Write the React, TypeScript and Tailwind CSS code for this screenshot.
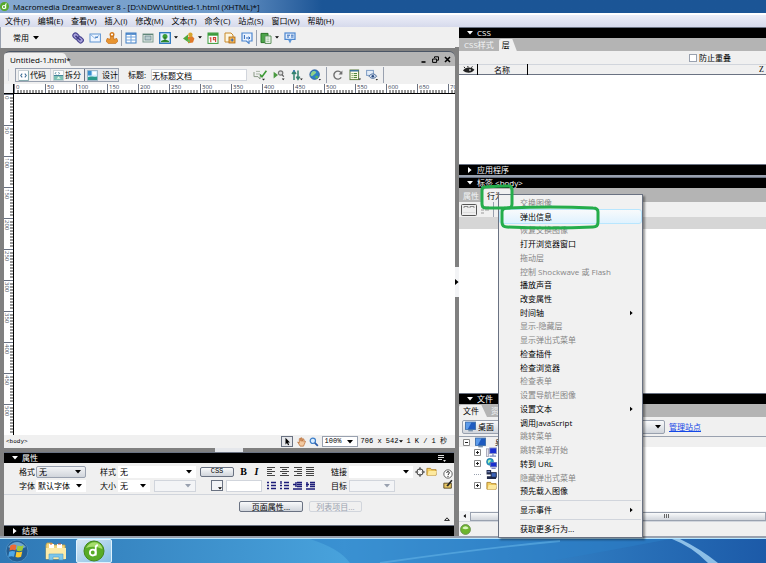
import React from 'react';
import clsx from 'clsx';

interface IconProps {
	children: React.ReactNode;
	className?: string;
	box?: string;
}

const Icon = ({ children, className, box = '0 0 12 12' }: IconProps) => (
	<svg viewBox={box} className={clsx('shrink-0', className ?? 'w-3 h-3')} fill="none" aria-hidden="true">
		{children}
	</svg>
);

const Caret = ({ className }: { className?: string }) => (
	<Icon box="0 0 6 4" className={clsx('w-[6px] h-1 pointer-events-none', className)}>
		<path d="M0 0h6L3 3.6z" fill="currentColor" />
	</Icon>
);

const CaretRight = ({ className }: { className?: string }) => (
	<Icon box="0 0 4 6" className={clsx('w-1 h-[6px]', className)}>
		<path d="M0 0v6l3.6-3z" fill="currentColor" />
	</Icon>
);

/* ---------- icons ---------- */

const LinkIcon = () => (
	<Icon>
		<g transform="rotate(42 6 6)">
			<rect x="0" y="3.4" width="6.4" height="5" rx="2.2" fill="#a9a3dc" stroke="#4a4590" strokeWidth="1.2" />
			<rect x="5.6" y="3.4" width="6.4" height="5" rx="2.2" fill="#a9a3dc" stroke="#4a4590" strokeWidth="1.2" />
			<path d="M2.6 6h6.8" stroke="#3b3780" strokeWidth="1.6" />
		</g>
	</Icon>
);
const MailIcon = () => (
	<Icon>
		<rect x="1" y="2" width="10.4" height="8" fill="#eef5ff" stroke="#5d93d2" />
		<path d="M2 3l4.2 3.6L10.4 3" stroke="#8fb7e3" />
		<path d="M6 5.2h3" stroke="#2d6cb5" />
	</Icon>
);
const AnchorIcon = () => (
	<Icon>
		<circle cx="6" cy="2.6" r="1.8" fill="#fff" stroke="#d47a1c" strokeWidth="1.4" />
		<path d="M4.4 4.4h3.2V7h1.8l1-1L12 9l-2.3 2.6H2.3L0 9l1.6-3 1 1h1.8z" fill="#e8942f" stroke="#b9610f" strokeWidth=".6" />
	</Icon>
);
const TableIcon = () => (
	<Icon>
		<rect x="1" y="1" width="10" height="10" fill="#fff" stroke="#3d7cc4" />
		<path d="M1 2h10" stroke="#3d7cc4" strokeWidth="1.6" />
		<path d="M6 2v9M1 5h10M1 8h10" stroke="#6ea1db" />
	</Icon>
);
const LayerIcon = () => (
	<Icon>
		<rect x="1" y="2" width="10" height="8" fill="#e6efe9" stroke="#7d9a90" />
		<rect x="3" y="4" width="6" height="4" fill="#b9cdd0" stroke="#6c878e" strokeWidth=".8" />
		<path d="M1 2.5h10" stroke="#60867a" />
	</Icon>
);
const ImageIcon = () => (
	<Icon>
		<rect x=".7" y=".7" width="10.6" height="10.6" fill="#dff0ff" stroke="#2c76bf" strokeWidth="1.3" />
		<circle cx="6" cy="4.4" r="2.5" fill="#3b9c35" />
		<path d="M2 9.2c2-2 6-2 8 0v1H2z" fill="#2c8a2c" />
		<path d="M6 5v4" stroke="#215f1f" />
	</Icon>
);
const MediaIcon = () => (
	<Icon>
		<path d="M0 6.4l5-4V10z" fill="#52a83b" />
		<path d="M5 5l4-1 2.4 2.6L10 10.6l-5 .6z" fill="#e0792a" />
		<circle cx="7.4" cy="2.8" r="2.2" fill="#d8a42c" />
		<path d="M4 8.4l3-1.6v4.4z" fill="#6fbb52" />
	</Icon>
);
const CalendarIcon = () => (
	<Icon>
		<rect x="1" y="1" width="10" height="10.4" fill="#fff" stroke="#3b9b3b" />
		<path d="M1 2.4h10" stroke="#3b9b3b" strokeWidth="2.6" />
		<path d="M3.8 5.2v5M2.6 6h1M8.6 10V5.6H6.4v2.2h2" stroke="#d04030" strokeWidth="1.1" />
	</Icon>
);
const IncludeIcon = () => (
	<Icon>
		<path d="M1 1h6l2 2v7H1z" fill="#fdf6e0" stroke="#c98a2b" />
		<rect x="5" y="5" width="6" height="6" fill="#f5b556" stroke="#a9650e" strokeWidth=".8" />
		<path d="M6.6 8h3M8.2 6.5v3" stroke="#2c66b8" strokeWidth="1.2" />
	</Icon>
);
const CommentIcon = () => (
	<Icon>
		<path d="M1 1h10v8H8v2.4L5.4 9H1z" fill="#eaf3ff" stroke="#4c86cf" strokeWidth="1.2" />
		<path d="M3.4 3v4M5 6h4M7.6 4.6L9 6 7.6 7.4" stroke="#2c66b8" />
	</Icon>
);
const TemplateIcon = () => (
	<Icon>
		<path d="M1 1.4h7v9.2H1z" fill="#4da64a" stroke="#2b7428" />
		<path d="M5 4h6v7.4H5z" fill="#f7fbf6" stroke="#5a8f58" />
		<path d="M6.4 6h3M6.4 7.8h3M6.4 9.4h3" stroke="#8bb68a" strokeWidth=".8" />
	</Icon>
);
const TagIcon = () => (
	<Icon>
		<rect x="1" y="1" width="10" height="6.4" fill="#e2eefc" stroke="#4c86cf" strokeWidth="1.2" />
		<path d="M3 3.2h3M3 5h2M7 3.2h2.6M7 5h2.6" stroke="#2c66b8" />
		<path d="M4 7.6h4L6 11.6z" fill="#5e97d8" />
	</Icon>
);
const GlobeIcon = () => (
	<Icon>
		<circle cx="5.6" cy="5.6" r="4.8" fill="#2e7fc6" stroke="#1d4f8c" strokeWidth=".7" />
		<path d="M2.4 3.4c2-2 3.8-1.6 4.6-.4S5 5.4 4 6.6 2 7 1.4 6z" fill="#8fd18a" />
		<path d="M6.4 7c2-.8 3 0 2.6 1.4S7 9.8 6.4 9z" fill="#58b458" />
		<path d="M9.6 10h2.4l-1.2 1.4z" fill="#222" />
	</Icon>
);
const CheckPageIcon = () => (
	<Icon box="0 0 16 12" className="w-4 h-3">
		<path d="M2 3v4.6h4l2 2.4V7.6h2" stroke="#8a9a86" />
		<path d="M4 2.4h4M4 5h4" stroke="#a9b6a5" />
		<path d="M8 5.4l2 2.4 4.4-6" stroke="#3c9a34" strokeWidth="1.6" />
		<path d="M10 9.8h3l-1.5 1.8z" fill="#222" />
	</Icon>
);
const ValidateIcon = () => (
	<Icon>
		<path d="M.6 2.8v6.6L5 6z" fill="#4a9a41" />
		<circle cx="7.6" cy="4" r="2.2" fill="#ddd" stroke="#777" strokeWidth="1.2" />
		<path d="M9 5.6l1.8 2" stroke="#555" strokeWidth="1.2" />
		<path d="M8.8 9.4h2.8l-1.4 1.8z" fill="#222" />
	</Icon>
);
const FileManageIcon = () => (
	<Icon>
		<path d="M3 11V3M1 5l2-3 2 3M7 1.6v8M5.4 7.6L7 10.4l1.8-2.8" stroke="#35836f" strokeWidth="1.5" />
		<circle cx="3" cy="2" r="1" fill="#3b78b8" />
		<path d="M9 9.4h2.8l-1.4 1.8z" fill="#222" />
	</Icon>
);
const RefreshIcon = () => (
	<Icon>
		<path d="M9.2 8.4A4 4 0 1 1 9 3.6" stroke="#6f6f6f" strokeWidth="1.4" />
		<path d="M10.4 1.4v4H6.6z" fill="#6f6f6f" />
	</Icon>
);
const ViewOptionsIcon = () => (
	<Icon>
		<rect x="1" y="1" width="8.6" height="9.6" fill="#fffde8" stroke="#5b7a3c" />
		<path d="M1 1.8h8.6" stroke="#2f6e9e" strokeWidth="1.4" />
		<path d="M2.6 4.6h1M2.6 6.6h1M2.6 8.6h1M4.6 4.6H8M4.6 6.6H8M4.6 8.6H8" stroke="#3f7e2e" />
		<path d="M9.6 9.6h2.4l-1.2 1.6z" fill="#222" />
	</Icon>
);
const VisualAidsIcon = () => (
	<Icon>
		<rect x=".6" y="1.4" width="6.8" height="5" fill="#e3ecf7" stroke="#7e9cc4" />
		<path d="M3 7.2c2-3 5.6-3 7.6 0-2 2.8-5.6 2.8-7.6 0z" fill="#dbe6f3" stroke="#4a6a9a" />
		<circle cx="6.8" cy="7.2" r="1.3" fill="#2a4a80" />
		<path d="M9.6 10h2.4l-1.2 1.6z" fill="#222" />
	</Icon>
);
const CodeIcon = () => (
	<Icon className="w-[11px] h-[11px]">
		<rect x=".6" y=".6" width="10.8" height="10.8" fill="#fff" stroke="#c5cdd2" />
		<path d="M1 11.4h10.4V1" stroke="#7ba3a8" />
		<path d="M4.6 4L3 6l1.6 2M7.4 4L9 6 7.4 8" stroke="#3a6a94" strokeWidth="1.1" />
	</Icon>
);
const SplitIcon = () => (
	<Icon className="w-[11px] h-[11px]">
		<rect x=".6" y=".6" width="10.8" height="10.8" fill="#fff" stroke="#c5cdd2" />
		<rect x="1" y="6" width="10" height="5" fill="#7cc0b4" />
		<path d="M3.4 2.4L2.4 3.6l1 1.2M6 2.4l1 1.2-1 1.2M1 6h10" stroke="#3a7a94" />
		<path d="M4 9.6l2-2.4 2.4 2.4z" fill="#e8fbe8" />
	</Icon>
);
const DesignIcon = () => (
	<Icon className="w-[11px] h-[11px]">
		<rect x=".6" y=".6" width="10.8" height="10.8" fill="#d4efff" stroke="#9ab4c4" />
		<path d="M1 1h4v5H1z" fill="#3a8fd0" />
		<path d="M1 11V8c3-2 5 0 10-1v4z" fill="#2a9a8a" />
		<path d="M6 2h4v3H6z" fill="#fff" />
	</Icon>
);
const EyeIcon = () => (
	<Icon box="0 0 12 8" className="w-3 h-2">
		<path d="M0 4.6C2.4 1 8 .4 11.4 3.8 9 7.4 3.6 7.8 0 4.6z" fill="#222" />
		<path d="M2 2.2L1 .8M5 1.4L4.8 0M8.4 1.8L9.4.4" stroke="#222" />
		<circle cx="7" cy="4" r="1" fill="#bbb" />
	</Icon>
);
const FolderIcon = () => (
	<Icon className="w-[11px] h-[11px]">
		<path d="M1 10V2.6h4l1 1.4h5v6z" fill="#f3cf62" stroke="#a9781c" strokeWidth=".9" />
		<path d="M1.6 10L3 5.4h8.6L10.6 10z" fill="#fde99e" />
	</Icon>
);
const MonitorIcon = () => (
	<Icon className="w-[11px] h-[11px]">
		<rect x=".6" y="1.2" width="10.8" height="8" fill="#1f5bc0" stroke="#3e6ea8" />
		<path d="M1 1.6h6L3 9H1z" fill="#5c9bea" />
		<path d="M3.6 10.6h5" stroke="#6f8aa8" strokeWidth="1.4" />
	</Icon>
);
const ComputerIcon = () => (
	<Icon className="w-[11px] h-[11px]">
		<rect x="4" y="1" width="7.4" height="6.2" fill="#1a2ed0" stroke="#8d96c4" />
		<rect x=".6" y="2" width="2.4" height="8.4" fill="#e6e6ee" stroke="#8a8aa0" strokeWidth=".7" />
		<path d="M4 10h7M7.6 7.6V10" stroke="#7a86c0" strokeWidth="1.4" />
	</Icon>
);
const NetworkIcon = () => (
	<Icon className="w-[11px] h-[11px]">
		<circle cx="4.4" cy="4.2" r="3.8" fill="#23a0c8" stroke="#14608f" strokeWidth=".6" />
		<path d="M2 3c2-2 4-1 3 .6S3 5 2.4 6z" fill="#b6f0b0" />
		<rect x="5" y="5" width="6.4" height="4.6" fill="#1a2ed0" stroke="#5d68b8" />
		<path d="M6 11.2h4.6" stroke="#4b58b0" />
	</Icon>
);
const ServerIcon = () => (
	<Icon className="w-[11px] h-[11px]">
		<path d="M.6 1h5v5h-5zM1 8h10v3H1z" fill="#222b4c" />
		<rect x="5.6" y="4" width="5.6" height="5" fill="#3b62b8" stroke="#1a2240" />
		<path d="M1.4 3h3" stroke="#9fb2e8" />
	</Icon>
);
const AlignIcon = ({ lines }: { lines: string }) => (
	<Icon className="w-[9px] h-[9px]" box="0 0 9 9">
		<path d={lines} stroke="#444" strokeWidth="1" />
	</Icon>
);

const menus = ['文件(F)', '编辑(E)', '查看(V)', '插入(I)', '修改(M)', '文本(T)', '命令(C)', '站点(S)', '窗口(W)', '帮助(H)'];

const behaviors = [
	{ label: '交换图像', off: true },
	{ label: '弹出信息', active: true },
	{ label: '恢复交换图像', off: true },
	{ label: '打开浏览器窗口' },
	{ label: '拖动层', off: true },
	{ label: '控制 Shockwave 或 Flash', off: true },
	{ label: '播放声音' },
	{ label: '改变属性' },
	{ label: '时间轴', sub: true },
	{ label: '显示-隐藏层', off: true },
	{ label: '显示弹出式菜单', off: true },
	{ label: '检查插件' },
	{ label: '检查浏览器' },
	{ label: '检查表单', off: true },
	{ label: '设置导航栏图像', off: true },
	{ label: '设置文本', sub: true },
	{ label: '调用JavaScript' },
	{ label: '跳转菜单', off: true },
	{ label: '跳转菜单开始', off: true },
	{ label: '转到 URL' },
	{ label: '隐藏弹出式菜单', off: true },
	{ label: '预先载入图像' },
];

/* ---------- shared parts ---------- */

interface SelectProps {
	label: string;
	value?: string;
	className?: string;
	gray?: boolean;
	disabled?: boolean;
}

const Select = ({ label, value = '', className, gray, disabled }: SelectProps) => (
	<div
		className={clsx(
			'relative flex items-center h-3',
			gray ? 'border border-gray-400 rounded-xs bg-linear-to-b from-gray-100 to-gray-300' : 'bg-white',
			disabled && 'border border-gray-300 bg-gray-100!',
			className
		)}
	>
		<select aria-label={label} disabled={disabled} className="appearance-none w-full h-full pl-[2px] leading-none outline-none">
			<option>{value}</option>
		</select>
		<Caret className={clsx('absolute right-1', disabled ? 'text-gray-400' : 'text-black')} />
	</div>
);

const PanelHeader = ({ title, closed, menu }: { title: string; closed?: boolean; menu?: boolean }) => (
	<div className="h-[11px] shrink-0 flex items-center gap-1 px-2 bg-black text-white border-t border-gray-500">
		{closed ? <CaretRight className="mx-px" /> : <Caret />}
		<span>{title}</span>
		{menu && (
			<Icon className="w-2 h-2 ml-auto" box="0 0 8 8">
				<path d="M0 1.5h6M0 3.5h6M0 5.5h4" stroke="#ddd" />
				<path d="M5 6h3L6.5 8z" fill="#ddd" />
			</Icon>
		)}
	</div>
);

const Sep = ({ className }: { className?: string }) => <span className={clsx('w-px h-4 bg-gray-400 shrink-0', className)} />;

const MenuItem = ({ label, off, active, sub }: { label: string; off?: boolean; active?: boolean; sub?: boolean }) => (
	<button
		role="menuitem"
		disabled={off}
		className={clsx(
			'flex flex-1 items-center justify-between w-full min-h-0 pl-5 pr-2 text-left leading-none whitespace-nowrap rounded-xs',
			off ? 'text-[#858585]' : 'text-black',
			active && 'bg-linear-to-b from-slate-50 to-sky-100 outline outline-sky-200'
		)}
	>
		{label}
		{sub && <CaretRight className="w-[3px]!" />}
	</button>
);

const BehaviorMenu = () => (
	<div
		role="menu"
		className="absolute z-20 left-[39px] top-[17px] w-[145px] h-[344px] flex flex-col p-px bg-[#f1f1f1] border border-gray-500 shadow-[2px_2px_2px_rgba(0,0,0,0.4)]"
	>
		<div className="flex flex-col flex-1">
			{behaviors.map((b) => (
				<MenuItem key={b.label} {...b} />
			))}
		</div>
		<hr className="ml-5 my-[2px] border-gray-300" />
		<div className="flex h-[14px]">
			<MenuItem label="显示事件" sub />
		</div>
		<hr className="ml-5 my-[2px] border-gray-300" />
		<div className="flex h-[14px]">
			<MenuItem label="获取更多行为..." />
		</div>
	</div>
);

/* ---------- left side ---------- */

const InsertBar = () => (
	<div className="h-[21px] shrink-0 flex items-center pl-3 gap-[5px] bg-[#f0f0f0] border-l border-gray-400">
		<button className="flex items-center gap-1 mr-7">
			常用 <Caret />
		</button>
		<button><LinkIcon /></button>
		<button><MailIcon /></button>
		<button><AnchorIcon /></button>
		<Sep className="-mx-[2px]" />
		<button><TableIcon /></button>
		<button><LayerIcon /></button>
		<button className="flex items-center gap-[3px]">
			<ImageIcon /> <Caret className="w-1! h-[3px]!" />
		</button>
		<button className="flex items-center gap-[3px]">
			<MediaIcon /> <Caret className="w-1! h-[3px]!" />
		</button>
		<button><CalendarIcon /></button>
		<button><IncludeIcon /></button>
		<button><CommentIcon /></button>
		<Sep className="-mx-[2px]" />
		<button className="flex items-center gap-[3px]">
			<TemplateIcon /> <Caret className="w-1! h-[3px]!" />
		</button>
		<button><TagIcon /></button>
	</div>
);

const DocTabs = () => (
	<div className="h-[15px] shrink-0 flex items-end justify-between bg-[#b4b4b4] rounded-t-md border-t border-gray-600">
		<svg viewBox="0 0 68 14" className="absolute w-[68px] h-[14px]" aria-hidden="true">
			<path d="M0 14V4q0-3 3-3h55q3 0 4 3l5 10z" fill="#f0f0f0" />
		</svg>
		<span className="relative pl-[6px] leading-3">Untitled-1.html*</span>
		<div className="flex items-center gap-[5px] pr-1 pb-[3px]">
			<button aria-label="最小化">
				<Icon className="w-[7px] h-[7px]" box="0 0 7 7"><path d="M1.5 6h4" stroke="#000" strokeWidth="1.6" /></Icon>
			</button>
			<button aria-label="还原">
				<Icon className="w-[7px] h-[7px]" box="0 0 7 7">
					<path d="M2.5 2V.8h4v3.4H5M.6 3h4v3.4h-4z" stroke="#000" />
				</Icon>
			</button>
			<button aria-label="关闭">
				<Icon className="w-[7px] h-[7px]" box="0 0 7 7"><path d="M1 1l5 5M6 1L1 6" stroke="#000" strokeWidth="1.6" /></Icon>
			</button>
		</div>
	</div>
);

const DocToolbar = () => (
	<div className="h-[18px] shrink-0 flex items-center gap-[5px] pl-1 bg-[#f0f0f0]">
		<span className="w-px h-3 bg-gray-300" />
		<div className="flex h-[14px] ml-px border border-gray-400">
			<button className="flex items-center gap-px w-[34px] px-[2px]"><CodeIcon />代码</button>
			<button className="flex items-center gap-px w-[34px] px-[2px] border-l border-gray-300"><SplitIcon />拆分</button>
			<button className="flex items-center gap-1 w-[34px] px-[2px] bg-gray-200 border-l border-gray-500"><DesignIcon />设计</button>
		</div>
		<label htmlFor="doc-title" className="ml-1">标题:</label>
		<input id="doc-title" defaultValue="无标题文档" className="w-24 h-3 bg-white border border-gray-300 outline-none" />
		<button><CheckPageIcon /></button>
		<button><ValidateIcon /></button>
		<button className="ml-px"><FileManageIcon /></button>
		<button className="ml-px"><GlobeIcon /></button>
		<Sep />
		<button><RefreshIcon /></button>
		<button><ViewOptionsIcon /></button>
		<button><VisualAidsIcon /></button>
		<Sep />
	</div>
);

const topMarks = Array.from({ length: 15 }, (_, i) => i * 50);
const sideMarks = topMarks.slice(0, 11);

const TopRuler = () => (
	<div className="h-[10px] shrink-0 flex bg-white border-b border-black overflow-hidden text-[6px] leading-[6px] text-gray-700">
		<div className="w-[10px] shrink-0 bg-gray-100 border-r border-black" />
		{topMarks.map((m) => (
			<div key={m} className="relative w-[31px] shrink-0 border-l border-gray-500 pl-px">
				{m}
				<svg className="absolute left-0 bottom-0 w-[31px] h-[3px]" viewBox="0 0 31 3" aria-hidden="true">
					<path d="M3 0v3M6 0v3M9 0v3M12 0v3M15 0v3M18 0v3M21 0v3M24 0v3M27 0v3" stroke="#333" />
				</svg>
			</div>
		))}
	</div>
);

const SideRuler = () => (
	<div className="w-[10px] shrink-0 h-full bg-white border-r border-black overflow-hidden text-[6px] leading-[6px] text-gray-600">
		{sideMarks.map((m) => (
			<div key={m} className="relative h-[31px] border-t border-gray-500">
				<span className="block pt-px [writing-mode:vertical-rl]">{m}</span>
				<svg className="absolute right-0 top-0 w-[3px] h-[31px]" viewBox="0 0 3 31" aria-hidden="true">
					<path d="M0 3h3M0 6h3M0 9h3M0 12h3M0 15h3M0 18h3M0 21h3M0 24h3M0 27h3" stroke="#333" />
				</svg>
			</div>
		))}
	</div>
);

const StatusBar = () => (
	<div className="h-[13px] shrink-0 flex items-center gap-[3px] pl-[2px] pr-2 bg-[#f0f0f0] font-['Liberation_Mono','Noto_Sans_CJK_SC',monospace] text-[7px]">
		<span className="mr-auto text-[6px]">&lt;body&gt;</span>
		<button aria-label="选取工具" className="border border-gray-500 bg-gray-200">
			<Icon className="w-[10px] h-[9px]"><path d="M4 1v9l2-2 1.4 3 1.4-.6L7.4 7.4H10z" fill="#000" /></Icon>
		</button>
		<button aria-label="手形工具">
			<Icon className="w-[10px] h-[10px]">
				<path d="M2 6l2 1V2l1.4-.6L6 5V1l1.4.2v4l1-3 1.2.4-.2 3 1.2-1 .8.6-1.6 4L9 11H5z" fill="#f3c9a0" stroke="#b5652c" strokeWidth=".8" />
			</Icon>
		</button>
		<button aria-label="缩放工具">
			<Icon className="w-[10px] h-[10px]">
				<circle cx="4.6" cy="4.6" r="3.2" fill="#d8ecff" stroke="#3e7ec8" strokeWidth="1.4" />
				<path d="M7 7l3.6 3.6" stroke="#2c5ca8" strokeWidth="2" />
			</Icon>
		</button>
		<Select label="缩放比率" value="100%" className="w-9 h-[11px]! border border-gray-400" />
		<span className="flex items-center gap-px">706 x 542<Caret className="w-1! h-[3px]!" /></span>
		<span>1 K / 1 秒</span>
	</div>
);

const lists = [
	'M0 1.5h2M4 1.5h5M0 4.5h2M4 4.5h5M0 7.5h2M4 7.5h5',
	'M1 0v3M4 1.5h5M0 4.5h2M4 4.5h5M0 7.5h2M4 7.5h5',
	'M4 1.5h5M4 3.5h5M4 5.5h5M0 8h9M3 1v5M3 3.5H0',
	'M4 1.5h5M4 3.5h5M4 5.5h5M0 8h9M1 1v5M0 3.5h3',
];
const aligns = [
	'M0 .5h8M0 2.5h5M0 4.5h8M0 6.5h5M0 8.5h8',
	'M0 .5h9M2 2.5h5M0 4.5h9M2 6.5h5M0 8.5h9',
	'M1 .5h8M4 2.5h5M1 4.5h8M4 6.5h5M1 8.5h8',
	'M0 .5h8M0 2.5h8M0 4.5h8M0 6.5h8M0 8.5h8',
];

const Properties = () => (
	<div className="flex flex-col shrink-0 mx-px bg-[#f0f0f0]">
		<PanelHeader title="属性" menu />
		<div className="flex h-8 border-b border-gray-300">
			<div className="flex flex-col justify-center gap-[2px] pl-[15px]">
				<div className="flex items-center h-3">
					<span className="w-[17px]">格式</span>
					<Select label="格式" value="无" gray className="w-[50px]" />
					<span className="w-[18px] ml-[14px]">样式</span>
					<Select label="样式" value="无" className="w-[78px]" />
					<button className="w-[34px] h-[10px] ml-1 border border-gray-500 rounded-xs bg-linear-to-b from-gray-50 to-gray-300 leading-none font-['Liberation_Mono',monospace] text-[7px]">
						CSS
					</button>
					<button className="w-[13px] ml-[3px] font-bold font-['Liberation_Serif',serif] text-[10px] leading-none">B</button>
					<button className="w-[13px] mr-1 font-bold italic font-['Liberation_Serif',serif] text-[10px] leading-none">I</button>
					<div className="flex gap-1">
						{aligns.map((d) => (
							<button key={d}><AlignIcon lines={d} /></button>
						))}
					</div>
					<label htmlFor="link" className="w-[18px] ml-4">链接</label>
					<span className="relative flex items-center">
						<input id="link" className="w-16 h-3 bg-white outline-none" />
						<Caret className="absolute right-1" />
					</span>
					<button aria-label="指向文件" className="ml-[2px]">
						<Icon className="w-[10px] h-[10px]">
							<circle cx="6" cy="6" r="3.8" fill="#fff" stroke="#333" strokeWidth="1.2" />
							<path d="M6 0v4M6 8v4M0 6h4M8 6h4" stroke="#333" />
						</Icon>
					</button>
					<button aria-label="浏览文件" className="ml-px"><FolderIcon /></button>
				</div>
				<div className="flex items-center h-3">
					<span className="w-[17px]">字体</span>
					<Select label="字体" value="默认字体" className="w-[50px]" />
					<span className="w-[18px] ml-[14px]">大小</span>
					<Select label="大小" value="无" className="w-8" />
					<Select label="单位" disabled className="w-[42px] ml-1" />
					<button aria-label="文本颜色" className="flex items-end justify-end w-3 h-[11px] ml-[15px] border border-gray-500 bg-gray-100">
						<Caret className="w-1! h-[3px]!" />
					</button>
					<input aria-label="颜色值" className="w-9 h-3 ml-[3px] mr-1 bg-white border border-gray-300 outline-none" />
					<div className="flex gap-1 ml-px">
						{lists.map((d) => (
							<button key={d}>
								<Icon className="w-[9px] h-[9px]" box="0 0 9 9"><path d={d} stroke="#1c1c78" strokeWidth="1.4" /></Icon>
							</button>
						))}
					</div>
					<span className="w-[18px] ml-4">目标</span>
					<Select label="目标" disabled className="w-[46px]" />
				</div>
			</div>
			<div className="flex flex-col items-center justify-center ml-auto mr-px">
				<button aria-label="帮助">
					<Icon className="w-[10px] h-[10px]">
						<circle cx="6" cy="6" r="5" fill="#fff" stroke="#444" />
						<path d="M4.4 4.6c0-2 3.2-2 3.2 0C7.6 6 6 5.8 6 7.2M6 8.2v1.4" stroke="#222" strokeWidth="1.2" />
					</Icon>
				</button>
				<button aria-label="快速标签编辑器">
					<Icon className="w-[10px] h-[10px]">
						<path d="M1 5h9v6H1z" fill="#e8c766" stroke="#4a3a14" />
						<path d="M4 8l6-7 1.4 1L6 9z" fill="#222" />
					</Icon>
				</button>
			</div>
		</div>
		<div className="flex items-start h-[30px] pt-[6px]">
			<button className="w-16 h-[11px] ml-[235px] border border-gray-500 rounded-xs bg-linear-to-b from-gray-50 to-gray-300 leading-none">页面属性...</button>
			<button disabled className="w-[53px] h-[11px] ml-[6px] border border-gray-300 rounded-xs text-gray-400 leading-none">列表项目...</button>
			<Icon className="w-[6px] h-1 ml-auto mr-1 self-end mb-1" box="0 0 6 4"><path d="M.6 3.4L3 .8l2.4 2.6z" stroke="#222" /></Icon>
		</div>
		<PanelHeader title="结果" closed />
	</div>
);

/* ---------- right side ---------- */

const LayersPanel = () => (
	<section className="flex flex-col flex-[137] min-h-0">
		<PanelHeader title="CSS" />
		<div className="flex items-end h-[13px] shrink-0 bg-[#b4b4b4]">
			<button className="px-[5px] text-gray-100 leading-3">CSS样式</button>
			<button className="w-[18px] h-3 bg-[#f0f0f0] rounded-t-xs leading-3 [clip-path:polygon(0_0,75%_0,100%_100%,0_100%)] pr-1">层</button>
		</div>
		<label className="flex items-center justify-end gap-[2px] h-[13px] shrink-0 pr-[35px] bg-[#f0f0f0]">
			<input type="checkbox" className="appearance-none w-2 h-2 bg-white border border-gray-400" />
			防止重叠
		</label>
		<table className="w-full shrink-0 bg-[#f0f0f0] border-b border-gray-500 border-t border-t-gray-300">
			<thead>
				<tr className="h-[9px] leading-[9px]">
					<th className="w-[18px] pl-1 border-r border-black"><EyeIcon /></th>
					<th className="w-[50px] font-normal border-r border-black">名称</th>
					<th className="pr-[2px] font-normal text-right font-['Liberation_Serif',serif]">Z</th>
				</tr>
			</thead>
		</table>
		<div className="flex-1 bg-white" />
	</section>
);

const TagPanel = () => (
	<section className="relative flex flex-col flex-[216] min-h-0">
		<PanelHeader title="标签 <body>" />
		<div className="flex items-end h-[14px] shrink-0 bg-[#b4b4b4]">
			<button className="w-6 text-gray-100 leading-3">属性</button>
			<button className="w-7 h-[13px] pl-1 bg-[#f0f0f0] text-left leading-3 rounded-t-xs">行为</button>
		</div>
		<div className="flex items-center gap-1 h-[15px] shrink-0 px-[2px] bg-[#f0f0f0]">
			<Icon className="w-4 h-3" box="0 0 16 12">
				<rect x=".5" y=".5" width="15" height="11" rx="1" fill="#eee" stroke="#555" />
				<path d="M3 4V2.5h4V4M9 4V2.5h4V4" stroke="#888" />
				<path d="M2 8.5h12" stroke="#ddd" />
			</Icon>
			<Icon className="w-2 h-[10px]" box="0 0 8 10">
				<path d="M0 2h3M0 5h3M0 8h3M4 2h4M4 5h4" stroke="#999" />
			</Icon>
			<Sep />
		</div>
		<div className="h-3 shrink-0 bg-[#d6d6d6]" />
		<div className="flex-1 bg-white" />
		<BehaviorMenu />
		<svg viewBox="0 0 126 50" className="absolute z-30 left-[20px] top-[6px] w-[126px] h-[50px] pointer-events-none" fill="none" aria-hidden="true">
			<path d="M6 4q12-1 24-1 3 0 3 4v14q0 4-4 4H7q-4 0-4-4V7q0-3 3-3z" stroke="#25ad4b" strokeWidth="3" />
			<path d="M28 25q44-2 86 0 5 0 5 4v10q0 5-5 5-42 2-86 0-5 0-5-5V29q0-4 5-4z" stroke="#25ad4b" strokeWidth="3" />
		</svg>
	</section>
);

const tree = [
	{ icon: <ComputerIcon />, open: true },
	{ icon: <NetworkIcon />, open: true },
	{ icon: <ServerIcon />, open: false },
	{ icon: <FolderIcon />, open: true },
];

const Box = ({ plus }: { plus?: boolean }) => (
	<Icon className="w-[7px] h-[7px]" box="0 0 7 7">
		<path d="M.5.5h6v6h-6z" fill="#fff" stroke="#888" />
		<path d={plus ? 'M2 3.5h3M3.5 2v3' : 'M2 3.5h3'} stroke="#222" />
	</Icon>
);

const FilesPanel = () => (
	<section className="flex flex-col shrink-0">
		<PanelHeader title="文件" />
		<div className="flex items-end h-[13px] shrink-0 bg-[#b4b4b4]">
			<button className="w-7 h-3 pr-1 bg-[#f0f0f0] leading-3 rounded-t-xs [clip-path:polygon(0_0,80%_0,100%_100%,0_100%)]">文件</button>
			<button className="pl-1 text-gray-100 leading-3">资源</button>
		</div>
		<div className="flex items-center gap-1 h-[19px] pl-[3px] bg-[#f0f0f0]">
			<div className="relative flex items-center gap-[2px] w-[203px] h-[14px] pl-[2px] border border-gray-400 rounded-xs bg-linear-to-b from-gray-50 to-gray-300">
				<MonitorIcon />
				<select aria-label="站点" className="appearance-none flex-1 outline-none leading-none">
					<option>桌面</option>
				</select>
				<Caret className="absolute right-[3px]" />
			</div>
			<a href="#sites" className="text-blue-700 underline">管理站点</a>
		</div>
		<div className="h-[75px] bg-white border-t border-gray-400">
			<div className="flex items-center gap-[5px] h-[10px] pl-1 bg-[#f0f0f0]">
				<Box />
				<MonitorIcon />
				<span className="pl-1">桌面</span>
			</div>
			{tree.map((t, i) => (
				<div key={i} className="flex items-center gap-[5px] h-[11px] pl-[15px]">
					{t.open ? <Box plus /> : <span className="w-[7px] border-t border-dotted border-gray-400" />}
					{t.icon}
				</div>
			))}
		</div>
		<div className="flex items-center h-[10px] gap-1 pl-1 bg-gray-100">
			<CaretRight className="rotate-180 w-[3px]! h-1!" />
			<div className="flex flex-1 items-center justify-center h-[9px] pl-[98px] border border-gray-400 bg-linear-to-b from-gray-50 to-gray-300">
				<Icon className="w-[6px] h-1" box="0 0 6 4"><path d="M.5 0v4M2.5 0v4M4.5 0v4" stroke="#666" /></Icon>
			</div>
		</div>
		<div className="flex items-center h-[15px] pl-px bg-[#f0f0f0] border-t border-gray-300">
			<Icon className="w-[11px] h-[11px]">
				<circle cx="6" cy="6" r="5.4" fill="#6cb52d" stroke="#6b8f50" />
				<path d="M2.6 4.6c1.4-3 5.4-3 6.8 0-2 1.6-4.8 1.6-6.8 0z" fill="#d9f5bd" />
			</Icon>
		</div>
	</section>
);

const Taskbar = () => (
	<footer className="relative h-[25px] shrink-0 flex items-center bg-linear-to-r from-[#2f78b5] via-[#48a2dc] via-45% to-[#1c5aa8] border-t border-sky-200 overflow-hidden">
		<svg viewBox="0 0 766 25" preserveAspectRatio="none" className="absolute inset-0 w-full h-full" aria-hidden="true">
			<path d="M310 0q30 10 40 25h190Q610 12 670 0z" fill="#2b80c8" opacity=".5" />
			<path d="M672 0h8q20 10 38 25h-10Q692 8 672 0z" fill="#a8d6f5" opacity=".8" />
			<path d="M380 25Q480 10 560 2" stroke="#62b2e6" strokeWidth="2" fill="none" opacity=".6" />
		</svg>
		<button aria-label="开始" className="relative ml-[5px]">
			<Icon className="w-6 h-6" box="0 0 24 24">
				<circle cx="12" cy="12" r="11" fill="#225e95" stroke="#4a8cc0" />
				<path d="M3 8q9-10 18 0-9 5-18 0z" fill="#8ec3e6" opacity=".7" />
				<path d="M5.4 6.6q3.2-1.8 6-.4l-1 5.2q-2.8-1.2-6 .2z" fill="#ee6a35" />
				<path d="M12.6 6.6q2.8 1.2 6-.4l-1.2 5.2q-2.8 1.4-5.8.2z" fill="#9ccb3b" />
				<path d="M4.2 12.8q3-1.4 5.9-.3L9 17.7q-2.6-1.1-5.8.3z" fill="#4fa8e8" />
				<path d="M11.4 12.8q2.8 1 5.9-.2l-1.2 5.1q-2.8 1.3-5.6.3z" fill="#fbc82f" />
			</Icon>
		</button>
		<button aria-label="资源管理器" className="relative ml-4">
			<Icon className="w-[22px] h-5" box="0 0 22 20">
				<path d="M1 18V4l1-2h5l2 2h11v14z" fill="#f0d47c" stroke="#c8a448" strokeWidth=".8" />
				<path d="M4 3h5v4H4zM12 3h5v4h-5z" fill="#fff" />
				<path d="M5 3h2M13 3h3" stroke="#d0562e" />
				<path d="M1 7h20v11H1z" fill="#fbeaa8" />
				<path d="M4 19v-6h14v6h-4v-3H8v3z" fill="#7cc6ea" stroke="#4a9fcf" strokeWidth=".6" />
			</Icon>
		</button>
		<button
			aria-label="Dreamweaver"
			className="relative flex items-center justify-center w-9 h-full ml-[9px] border border-sky-100 rounded-xs bg-linear-to-br from-white/80 to-sky-200/60"
		>
			<Icon className="w-[22px] h-[22px]" box="0 0 22 22">
				<circle cx="11" cy="11" r="10" fill="#58ab26" stroke="#43881a" />
				<path d="M3 8Q7 1 14 2.6 19 5 19.4 9 11 5 3 8z" fill="#a6de6d" />
				<circle cx="9.8" cy="12.6" r="2.9" stroke="#fff" strokeWidth="1.8" />
				<path d="M12.7 15.6V7.4q0-2 2.2-2.2" stroke="#fff" strokeWidth="1.8" />
			</Icon>
		</button>
	</footer>
);

const App = () => {
	return (
		<div className="h-screen flex flex-col overflow-hidden bg-[#f0f0f0] text-black text-[8px] leading-none whitespace-nowrap font-['Open_Sans','Noto_Sans_CJK_SC',sans-serif]">
			<header className="h-[13px] shrink-0 flex items-center gap-[3px] bg-linear-to-r from-[#86a9d0] via-[#6f9bca] via-28% to-[#1b5596] to-42%">
				<Icon className="w-[10px] h-[11px]">
					<circle cx="5.4" cy="6" r="5.4" fill="#57a82a" />
					<circle cx="4.8" cy="6.6" r="1.9" stroke="#fff" strokeWidth="1.3" />
					<path d="M6.8 8.4V3.6q0-1 1.2-1" stroke="#fff" strokeWidth="1.3" />
				</Icon>
				<h1>Macromedia Dreamweaver 8 - [D:\NDW\Untitled-1.html (XHTML)*]</h1>
			</header>
			<nav className="h-[14px] shrink-0 flex items-center gap-2 pl-[5px] border-t-2 border-white bg-linear-to-b from-[#eceef8] to-[#d6daec]">
				{menus.map((m) => (
					<button key={m}>{m}</button>
				))}
			</nav>
			<main className="flex flex-1 min-h-0">
				<div className="flex flex-col flex-1 min-w-0">
					<InsertBar />
					<div className="flex flex-col flex-1 min-h-0 pl-[3px] pt-[3px] bg-[#808080]">
						<div className="relative flex flex-col flex-1 min-h-0 ml-px">
							<DocTabs />
							<DocToolbar />
							<TopRuler />
							<div className="flex flex-1 min-h-0 overflow-hidden bg-white">
								<SideRuler />
								<div className="flex-1" />
							</div>
							<StatusBar />
						</div>
						<div className="h-1 shrink-0 flex justify-center">
							<span className="w-7 bg-gray-200" />
						</div>
						<Properties />
					</div>
				</div>
				<div className="w-1 shrink-0 flex items-center bg-linear-to-b from-[#f0f0f0] from-4% to-[#808080] to-4%">
					<button aria-label="折叠面板" className="flex items-center w-1 h-[30px] bg-gray-100">
						<CaretRight />
					</button>
				</div>
				<aside className="flex flex-col w-[307px] shrink-0">
					<LayersPanel />
					<PanelHeader title="应用程序" closed />
					<div className="h-[2px] shrink-0 bg-gray-400" />
					<TagPanel />
					<FilesPanel />
				</aside>
			</main>
			<div className="h-[2px] shrink-0 bg-gray-400" />
			<Taskbar />
		</div>
	);
};

export default App;
